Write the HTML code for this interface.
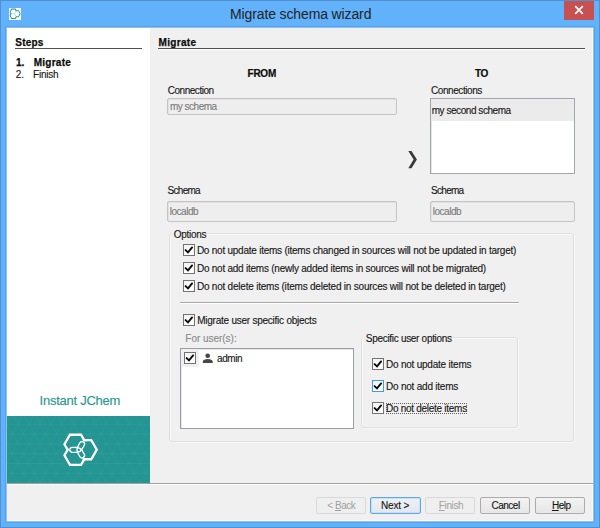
<!DOCTYPE html>
<html><head><meta charset="utf-8">
<style>
*{margin:0;padding:0;box-sizing:border-box}
html,body{width:600px;height:528px;overflow:hidden;background:#62b1fb}
body{position:relative;font-family:"Liberation Sans",sans-serif;font-size:10px;color:#151515}
.a{position:absolute}
.t{position:absolute;white-space:nowrap;line-height:12px}
.cb{position:absolute;width:12px;height:12px;border:1px solid #737373;background:linear-gradient(#f4f4f4,#fff)}
.cb svg{position:absolute;left:-1px;top:-1px}
.btn{position:absolute;width:50px;height:17px;border:1px solid #acacac;border-radius:2px;background:linear-gradient(#f2f2f2,#e6e6e6)}
</style></head><body>
<div class="a" style="left:0px;top:0px;width:600px;height:528px;border:1px solid #5290d0;background:#62b1fb"></div>
<div class="a" style="left:5px;top:26px;width:590px;height:497px;border:1px solid #50a5f2"></div>
<div class="a" style="left:6px;top:27px;width:588px;height:495px;border:1px solid #98bfe4"></div>
<div class="t" style="left:230.00px;top:8px;font-size:14px;letter-spacing:-0.125px;color:#222;">Migrate schema wizard</div>
<div class="a" style="left:9px;top:8px;width:12px;height:12px;background:#fff"></div>
<svg class="a" style="left:9px;top:8px" width="12" height="12" viewBox="0 0 12 12"><g transform="translate(-1.85,-1.9) scale(0.31)"><g fill="none" stroke="#239592" stroke-width="3.3"><path d="M9.50 19.30L15.00 9.77L26.00 9.77L31.50 19.30L26.00 28.83L15.00 28.83Z"/><path d="M9.50 30.30L15.00 20.77L26.00 20.77L31.50 30.30L26.00 39.83L15.00 39.83Z"/><path d="M19.70 24.70L25.20 15.17L36.20 15.17L41.70 24.70L36.20 34.23L25.20 34.23Z"/></g><g fill="#fff"><path d="M11.48 19.30L15.99 11.49L25.01 11.49L29.52 19.30L25.01 27.11L15.99 27.11Z"/><path d="M11.48 30.30L15.99 22.49L25.01 22.49L29.52 30.30L25.01 38.11L15.99 38.11Z"/><path d="M21.68 24.70L26.19 16.89L35.21 16.89L39.72 24.70L35.21 32.51L26.19 32.51Z"/></g><g fill="none" stroke="#239592" stroke-opacity="0.45" stroke-width="2.2"><path d="M14.5 24.7H23.8L29 15.7M23.8 24.7L29 33.7"/></g></g></svg>
<div class="a" style="left:564px;top:1px;width:30px;height:19px;background:#c75050"></div>
<svg class="a" style="left:574px;top:5px" width="10" height="10" viewBox="0 0 10 10"><path d="M1.2 1.2L8.8 8.8M8.8 1.2L1.2 8.8" stroke="#fff" stroke-width="1.7"/></svg>
<div class="a" style="left:7px;top:28px;width:586px;height:493px;background:#f0f0f0"></div>
<div class="a" style="left:592px;top:28px;width:1px;height:493px;background:#fdfaf5"></div>
<div class="a" style="left:7px;top:520px;width:586px;height:1px;background:#fdfaf5"></div>
<div class="a" style="left:7px;top:28px;width:143px;height:455px;background:#fff"></div>
<div class="t" style="left:15.30px;top:37px;font-size:10px;letter-spacing:0.175px;font-weight:bold;color:#0c0c0c;-webkit-text-stroke:0.25px #0c0c0c;">Steps</div>
<div class="a" style="left:15px;top:48px;width:127px;height:1px;background:#505050"></div>
<div class="a" style="left:15px;top:49px;width:127px;height:1px;background:#fff"></div>
<div class="t" style="left:16.00px;top:57px;font-size:10px;letter-spacing:0.000px;font-weight:bold;color:#0c0c0c;-webkit-text-stroke:0.25px #0c0c0c;">1.</div>
<div class="t" style="left:33.70px;top:57px;font-size:10px;letter-spacing:0.267px;font-weight:bold;color:#0c0c0c;-webkit-text-stroke:0.25px #0c0c0c;">Migrate</div>
<div class="t" style="left:15.80px;top:69px;font-size:10px;letter-spacing:0.000px;-webkit-text-stroke:0.12px #151515;">2.</div>
<div class="t" style="left:33.00px;top:69px;font-size:10px;letter-spacing:-0.200px;-webkit-text-stroke:0.12px #151515;">Finish</div>
<div class="t" style="left:39.60px;top:395px;font-size:13px;letter-spacing:-0.258px;color:#2a9892;-webkit-text-stroke:0.15px #2a9892;">Instant JChem</div>
<svg class="a" style="left:7px;top:416px" width="143" height="67" viewBox="0 0 143 67">
<defs><pattern id="tri" width="11.1" height="19.6" patternUnits="userSpaceOnUse" x="-0.3" y="7.8"><path d="M0 0L11.1 19.6M11.1 0L0 19.6" stroke="#fff" stroke-opacity="0.05" stroke-width="0.8" fill="none"/><rect y="0" width="11.1" height="0.8" fill="#fff" fill-opacity="0.05"/><rect y="9.8" width="11.1" height="0.8" fill="#fff" fill-opacity="0.05"/></pattern></defs>
<rect width="143" height="67" fill="#239592"/>
<rect width="143" height="67" fill="url(#tri)"/>
<g transform="translate(48,9)">
<g fill="none" stroke="#fff" stroke-width="2.4">
<path d="M9.5 19.3L15 9.8H26L31.5 19.3L26 28.8H15Z"/>
<path d="M9.5 30.3L15 20.8H26L31.5 30.3L26 39.8H15Z"/>
<path d="M19.5 24.7L25 15.2H36.2L41.7 24.7L36.2 34.2H25Z"/>
</g>
<g fill="#239592">
<path d="M10.95 19.3L15.72 11.05H25.28L30.05 19.3L25.28 27.55H15.72Z"/>
<path d="M10.95 30.3L15.72 22.05H25.28L30.05 30.3L25.28 38.55H15.72Z"/>
<path d="M20.95 24.7L25.72 16.45H35.48L40.25 24.7L35.48 32.95H25.72Z"/>
</g>
<g transform="translate(23.8,24.8)">
<g fill="none" stroke="#fff" stroke-width="1.5">
<rect x="-2.4" y="-2.4" width="11.3" height="4.8" rx="2.4" transform="rotate(180)"/>
<rect x="-2.4" y="-2.4" width="11.3" height="4.8" rx="2.4" transform="rotate(-60)"/>
<rect x="-2.4" y="-2.4" width="11.3" height="4.8" rx="2.4" transform="rotate(60)"/>
</g>
<g fill="#239592">
<rect x="-1.65" y="-1.65" width="9.8" height="3.3" rx="1.65" transform="rotate(180)"/>
<rect x="-1.65" y="-1.65" width="9.8" height="3.3" rx="1.65" transform="rotate(-60)"/>
<rect x="-1.65" y="-1.65" width="9.8" height="3.3" rx="1.65" transform="rotate(60)"/>
</g>
<circle r="1.9" fill="#239592" stroke="#fff" stroke-width="1.3"/>
</g>
</g>
</svg>
<div class="a" style="left:7px;top:483px;width:586px;height:1px;background:#a0a0a0"></div>
<div class="a" style="left:7px;top:484px;width:586px;height:1px;background:#fff"></div>
<div class="t" style="left:158.50px;top:37px;font-size:10px;letter-spacing:0.333px;font-weight:bold;color:#0c0c0c;-webkit-text-stroke:0.25px #0c0c0c;">Migrate</div>
<div class="a" style="left:158px;top:48px;width:427px;height:1px;background:#505050"></div>
<div class="a" style="left:158px;top:49px;width:427px;height:1px;background:#fff"></div>
<div class="t" style="left:247.50px;top:68px;font-size:10px;letter-spacing:-0.233px;font-weight:bold;color:#0c0c0c;-webkit-text-stroke:0.2px #0c0c0c;">FROM</div>
<div class="t" style="left:474.90px;top:68px;font-size:10px;letter-spacing:-0.200px;font-weight:bold;color:#0c0c0c;-webkit-text-stroke:0.2px #0c0c0c;">TO</div>
<div class="t" style="left:167.80px;top:85px;font-size:10px;letter-spacing:-0.478px;-webkit-text-stroke:0.12px #151515;">Connection</div>
<div class="a" style="left:167px;top:98px;width:230px;height:17px;border:1px solid #c4c4c4;border-radius:2px;background:#eeeeee;box-shadow:inset 1px 1px 0 #e2e2e2"></div>
<div class="t" style="left:170.00px;top:101px;font-size:10px;letter-spacing:-0.500px;color:#7a7a7a;-webkit-text-stroke:0.12px #7a7a7a;">my schema</div>
<div class="t" style="left:431.00px;top:85px;font-size:10px;letter-spacing:-0.430px;-webkit-text-stroke:0.12px #151515;">Connections</div>
<div class="a" style="left:430px;top:98px;width:145px;height:76px;border:1px solid #a2a5ac;background:#fff;box-shadow:inset 1px 1px 0 #e6e6e6"></div>
<div class="a" style="left:431px;top:99px;width:143px;height:22px;background:#ebebeb"></div>
<div class="t" style="left:431.70px;top:105px;font-size:10px;letter-spacing:-0.447px;-webkit-text-stroke:0.12px #151515;">my second schema</div>
<svg class="a" style="left:400px;top:145px" width="25" height="30" viewBox="0 0 25 30"><path d="M8.3 6.1H11.5L16.9 14.6L11.5 23.2H8.3L13.6 14.6Z" fill="#383838"/></svg>
<div class="t" style="left:167.50px;top:185px;font-size:10px;letter-spacing:-0.700px;-webkit-text-stroke:0.12px #151515;">Schema</div>
<div class="a" style="left:167px;top:201px;width:230px;height:21px;border:1px solid #c4c4c4;border-radius:2px;background:#eeeeee;box-shadow:inset 1px 1px 0 #e2e2e2"></div>
<div class="t" style="left:169.70px;top:206px;font-size:10px;letter-spacing:-0.450px;color:#7a7a7a;-webkit-text-stroke:0.12px #7a7a7a;">localdb</div>
<div class="t" style="left:431.00px;top:185px;font-size:10px;letter-spacing:-0.700px;-webkit-text-stroke:0.12px #151515;">Schema</div>
<div class="a" style="left:430px;top:201px;width:145px;height:21px;border:1px solid #c4c4c4;border-radius:2px;background:#eeeeee;box-shadow:inset 1px 1px 0 #e2e2e2"></div>
<div class="t" style="left:432.70px;top:206px;font-size:10px;letter-spacing:-0.450px;color:#7a7a7a;-webkit-text-stroke:0.12px #7a7a7a;">localdb</div>
<div class="a" style="left:169px;top:233px;width:405px;height:209px;border:1px solid #e0e0e0;border-radius:3px;box-shadow:inset 1px 1px 0 #f7f7f7,1px 1px 0 #f7f7f7"></div>
<div class="a" style="left:172px;top:228px;width:35px;height:10px;background:#f0f0f0"></div>
<div class="t" style="left:173.80px;top:229px;font-size:10px;letter-spacing:-0.300px;-webkit-text-stroke:0.12px #151515;">Options</div>
<div class="cb" style="left:183px;top:244px;border-color:#737373"><svg width="12" height="12" viewBox="0 0 12 12"><path d="M2.6 6.1L5 8.4L9.1 3.4" fill="none" stroke="#0c0c0c" stroke-width="1.9" stroke-linecap="round"/></svg></div>
<div class="t" style="left:196.90px;top:245px;font-size:10px;letter-spacing:-0.239px;-webkit-text-stroke:0.12px #151515;">Do not update items (items changed in sources will not be updated in target)</div>
<div class="cb" style="left:183px;top:262px;border-color:#737373"><svg width="12" height="12" viewBox="0 0 12 12"><path d="M2.6 6.1L5 8.4L9.1 3.4" fill="none" stroke="#0c0c0c" stroke-width="1.9" stroke-linecap="round"/></svg></div>
<div class="t" style="left:196.90px;top:263px;font-size:10px;letter-spacing:-0.237px;-webkit-text-stroke:0.12px #151515;">Do not add items (newly added items in sources will not be migrated)</div>
<div class="cb" style="left:183px;top:280px;border-color:#737373"><svg width="12" height="12" viewBox="0 0 12 12"><path d="M2.6 6.1L5 8.4L9.1 3.4" fill="none" stroke="#0c0c0c" stroke-width="1.9" stroke-linecap="round"/></svg></div>
<div class="t" style="left:196.90px;top:281px;font-size:10px;letter-spacing:-0.216px;-webkit-text-stroke:0.12px #151515;">Do not delete items (items deleted in sources will not be deleted in target)</div>
<div class="a" style="left:180px;top:302px;width:339px;height:1px;background:#a8a8a8"></div>
<div class="a" style="left:180px;top:303px;width:339px;height:1px;background:#fff"></div>
<div class="cb" style="left:183px;top:314px;border-color:#737373"><svg width="12" height="12" viewBox="0 0 12 12"><path d="M2.6 6.1L5 8.4L9.1 3.4" fill="none" stroke="#0c0c0c" stroke-width="1.9" stroke-linecap="round"/></svg></div>
<div class="t" style="left:197.20px;top:315px;font-size:10px;letter-spacing:-0.239px;-webkit-text-stroke:0.12px #151515;">Migrate user specific objects</div>
<div class="t" style="left:185.30px;top:333px;font-size:10px;letter-spacing:-0.027px;color:#8a8a8a;-webkit-text-stroke:0.12px #8a8a8a;">For user(s):</div>
<div class="a" style="left:180px;top:348px;width:174px;height:81px;border:1px solid #9a9da4;background:#fff;box-shadow:inset 1px 1px 0 #e6e6e6"></div>
<div class="a" style="left:181px;top:349px;width:18px;height:18px;background:#f0f0f0"></div>
<div class="cb" style="left:184px;top:352px;border-color:#737373"><svg width="12" height="12" viewBox="0 0 12 12"><path d="M2.6 6.1L5 8.4L9.1 3.4" fill="none" stroke="#0c0c0c" stroke-width="1.9" stroke-linecap="round"/></svg></div>
<svg class="a" style="left:202px;top:353px" width="12" height="10" viewBox="0 0 12 10"><circle cx="5.7" cy="2.75" r="2.35" fill="#474747"/><path d="M0.8 9.9V8.6C0.8 7 3 6.1 5.7 6.1S10.7 7 10.7 8.6V9.9Z" fill="#474747"/></svg>
<div class="t" style="left:217.00px;top:353px;font-size:10px;letter-spacing:-0.425px;-webkit-text-stroke:0.12px #151515;">admin</div>
<div class="a" style="left:361px;top:337px;width:157px;height:91px;border:1px solid #e0e0e0;border-radius:3px;box-shadow:inset 1px 1px 0 #f7f7f7,1px 1px 0 #f7f7f7"></div>
<div class="a" style="left:363px;top:331px;width:90px;height:10px;background:#f0f0f0"></div>
<div class="t" style="left:365.80px;top:333px;font-size:10px;letter-spacing:-0.300px;-webkit-text-stroke:0.12px #151515;">Specific user options</div>
<div class="cb" style="left:372px;top:358px;border-color:#737373"><svg width="12" height="12" viewBox="0 0 12 12"><path d="M2.6 6.1L5 8.4L9.1 3.4" fill="none" stroke="#0c0c0c" stroke-width="1.9" stroke-linecap="round"/></svg></div>
<div class="t" style="left:386.00px;top:359px;font-size:10px;letter-spacing:-0.222px;-webkit-text-stroke:0.12px #151515;">Do not update items</div>
<div class="cb" style="left:372px;top:380px;border-color:#3c9cf0"><svg width="12" height="12" viewBox="0 0 12 12"><path d="M2.6 6.1L5 8.4L9.1 3.4" fill="none" stroke="#0c0c0c" stroke-width="1.9" stroke-linecap="round"/></svg></div>
<div class="t" style="left:386.00px;top:381px;font-size:10px;letter-spacing:-0.220px;-webkit-text-stroke:0.12px #151515;">Do not add items</div>
<div class="cb" style="left:372px;top:402px;border-color:#737373"><svg width="12" height="12" viewBox="0 0 12 12"><path d="M2.6 6.1L5 8.4L9.1 3.4" fill="none" stroke="#0c0c0c" stroke-width="1.9" stroke-linecap="round"/></svg></div>
<div class="t" style="left:386.00px;top:403px;font-size:10px;letter-spacing:-0.278px;-webkit-text-stroke:0.12px #151515;">Do not delete items</div>
<div class="a" style="left:386px;top:403px;width:81px;height:11px;border:1px dotted #606060"></div>
<div class="btn" style="left:316px;top:497px;border-color:#d9d9d9;background:#efefef"></div>
<div class="t" style="left:327.30px;top:500px;font-size:10px;letter-spacing:-0.460px;color:#a0a0a0;">&lt; <u>B</u>ack</div>
<div class="btn" style="left:370px;top:497px;width:51px;border-color:#5ea6ee;background:linear-gradient(#eef2f6,#e3e8ee);box-shadow:inset 0 0 0 1px #c4e0fb"></div>
<div class="t" style="left:380.90px;top:500px;font-size:10px;letter-spacing:-0.140px;-webkit-text-stroke:0.12px #151515;">Next &gt;</div>
<div class="btn" style="left:425px;top:497px;border-color:#d9d9d9;background:#efefef"></div>
<div class="t" style="left:438.80px;top:500px;font-size:10px;letter-spacing:-0.360px;color:#a0a0a0;"><u>F</u>inish</div>
<div class="btn" style="left:480px;top:497px;"></div>
<div class="t" style="left:491.50px;top:500px;font-size:10px;letter-spacing:-0.500px;-webkit-text-stroke:0.12px #151515;">Cancel</div>
<div class="btn" style="left:535px;top:497px;"></div>
<div class="t" style="left:551.90px;top:500px;font-size:10px;letter-spacing:-0.433px;-webkit-text-stroke:0.12px #151515;"><u>H</u>elp</div>
</body></html>
